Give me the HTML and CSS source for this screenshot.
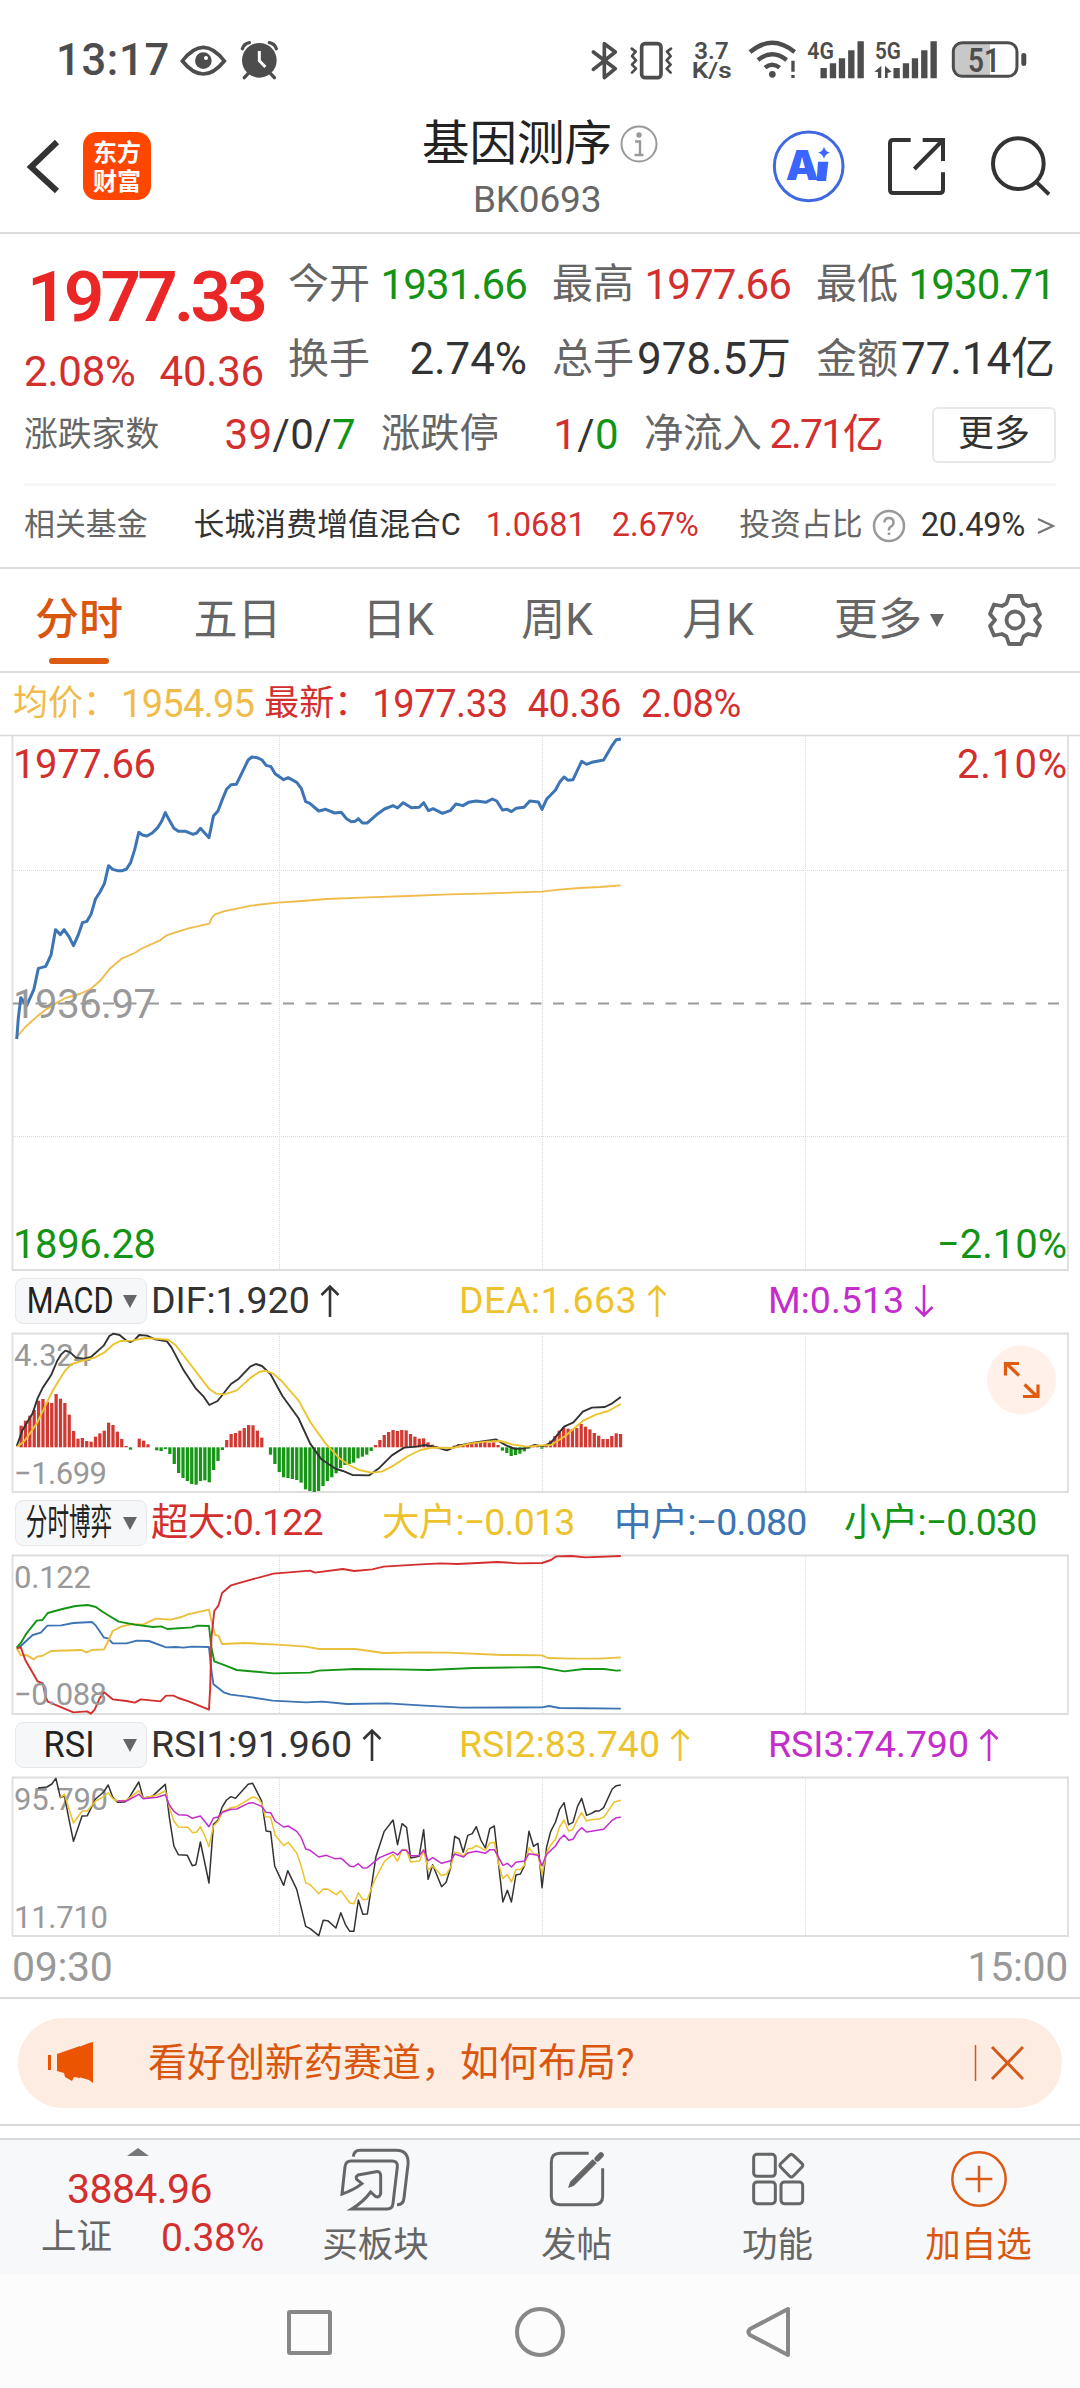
FILE: index.html
```html
<!DOCTYPE html>
<html lang="zh-CN">
<head>
<meta charset="utf-8">
<title>基因测序 BK0693</title>
<link rel="stylesheet" href="styles.css">
</head>
<body>
<svg class="defs" width="0" height="0">
  <symbol id="up" viewBox="0 0 20 34"><path d="M10 33V3M1.5 11L10 2.5L18.500 11" fill="none" stroke="currentColor" stroke-width="2.600"/></symbol>
  <symbol id="down" viewBox="0 0 20 34"><path d="M10 1V31M1.500 23L10 31.500L18.500 23" fill="none" stroke="currentColor" stroke-width="2.600"/></symbol>
</svg>

<div class="status">
  <span class="clock">13:17</span>
  <svg class="status-left" viewBox="540 45 300 120" width="100" height="40">
    <path d="M547 108Q610 26 673 108Q610 186 547 108Z" fill="none" stroke="#4d4d4d" stroke-width="11"/>
    <circle cx="610" cy="107" r="25" fill="#4d4d4d"/><circle cx="618" cy="99" r="6" fill="#fff"/>
    <circle cx="778" cy="106" r="52" fill="#4d4d4d"/>
    <path d="M727 71Q732 56 748 53M829 71Q824 56 808 53M744 146L733 158M812 146L823 158" stroke="#4d4d4d" stroke-width="10" stroke-linecap="round" fill="none"/>
    <path d="M778 78V107L796 126" stroke="#fff" stroke-width="9" fill="none"/>
  </svg>
  <svg class="status-right" viewBox="20 20 1330 150" width="443.3" height="50">
    <g fill="none" stroke="#4d4d4d" stroke-width="11" stroke-linejoin="round" stroke-linecap="round">
      <path d="M39 80L105 130L72 157V55L105 80L39 132"/>
      <rect x="184" y="55" width="58" height="102" rx="10" stroke-width="11"/>
      <path d="M154 70L166 79L155 92L167 105L155 118L167 130L155 142M272 70L260 79L271 92L259 105L271 118L259 130L271 142" stroke-width="8"/>
    </g>
    <g fill="none" stroke="#4d4d4d" stroke-width="13">
      <path d="M509 80Q575 25 643 80M533 104Q575 69 619 104M554 127Q575 109 598 127"/>
    </g>
    <circle cx="576" cy="147" r="10" fill="#4d4d4d"/>
    <path d="M638 106V139M638 149V158" stroke="#4d4d4d" stroke-width="10"/>
    <g stroke="#4d4d4d" stroke-width="19" stroke-linecap="butt">
      <path d="M730 128V159M758 114V159M785 99V159M813 75V159M841 48V159"/>
      <path d="M949 128V159M977 114V159M1004 99V159M1032 75V159M1060 48V159"/>
    </g>
    <path d="M882 139L903 122V158H893V140ZM934 139L914 122V158H922V143Z" fill="#4d4d4d"/>
    <path d="M1145 50H1229V155H1145Q1119 155 1119 128V77Q1119 50 1145 50Z" fill="#c8c8c8"/>
    <rect x="1119" y="52" width="191" height="101" rx="27" fill="none" stroke="#4d4d4d" stroke-width="9"/>
    <rect x="1323" y="83" width="15" height="39" rx="7" fill="#4d4d4d"/>
    <g class="status-text">
      <text x="342" y="101" font-size="72" textLength="103" lengthAdjust="spacingAndGlyphs">3.7</text>
      <text x="334" y="159" font-size="67" textLength="120" lengthAdjust="spacingAndGlyphs">K/s</text>
      <text x="681" y="101" font-size="70" textLength="80" lengthAdjust="spacingAndGlyphs">4G</text>
      <text x="884" y="101" font-size="70" textLength="78" lengthAdjust="spacingAndGlyphs">5G</text>
      <text x="1163" y="139" font-size="98" textLength="96" lengthAdjust="spacingAndGlyphs">51</text>
    </g>
  </svg>
</div>

<header class="header">
  <svg class="back" width="34" height="58" viewBox="0 0 34 58"><path d="M31 5L5 30L31 54" fill="none" stroke="#333" stroke-width="6"/></svg>
  <div class="logo">东方<br>财富</div>
  <div class="title">
    <div class="title-name">基因测序<svg width="38" height="38" viewBox="0 0 38 38"><circle cx="19" cy="19" r="17.500" fill="none" stroke="#999" stroke-width="2"/><circle cx="19" cy="10" r="2.700" fill="#999"/><path d="M15 16.500H20V29M14.500 30H23.500" fill="none" stroke="#999" stroke-width="2.400"/></svg></div>
    <div class="title-code">BK0693</div>
  </div>
  <svg class="tools" width="284" height="80" viewBox="570 300 852 240">
    <circle cx="686" cy="424" r="103" fill="none" stroke="#4068e0" stroke-width="9"/>
    <text x="617" y="465" class="ai">A</text>
    <path d="M714 410H745L738 468H710Z" fill="#3a66ff"/>
    <path d="M732 365Q736 380 750 383Q736 386 732 401Q728 386 714 383Q728 380 732 365Z" fill="#3a66ff"/>
    <g fill="none" stroke="#333" stroke-width="12">
      <path d="M992 345H940Q930 345 930 355V494Q930 504 940 504H1079Q1089 504 1089 494V442M1028 345H1089V408M1089 345L1003 432"/>
      <circle cx="1315" cy="416" r="76"/>
      <path d="M1370 472L1407 508"/>
    </g>
  </svg>
</header>

<section class="quote">
  <div class="quote-top">
    <div class="quote-main">
      <div class="price">1977.33</div>
      <div class="change"><span>2.08%</span><span>40.36</span></div>
    </div>
    <div class="quote-grid">
      <div class="cell"><label>今开</label><b class="green">1931.66</b></div>
      <div class="cell"><label>最高</label><b class="red">1977.66</b></div>
      <div class="cell"><label>最低</label><b class="green">1930.71</b></div>
      <div class="cell"><label>换手</label><b class="vol">2.74%</b></div>
      <div class="cell"><label>总手</label><b class="vol">978.5万</b></div>
      <div class="cell"><label>金额</label><b class="vol">77.14亿</b></div>
    </div>
  </div>
  <div class="breadth">
    <div class="cell"><label class="small">涨跌家数</label><b class="wide"><i class="red">39</i>/0/<i class="green">7</i></b></div>
    <div class="cell"><label>涨跌停</label><b class="wide"><i class="red">1</i>/<i class="green">0</i></b></div>
    <div class="cell"><label>净流入</label><b class="red inflow">2.71亿</b></div>
    <div class="more">更多</div>
  </div>
  <div class="fund">
    <span class="grey">相关基金</span>
    <span class="fund-name">长城消费增值混合C</span>
    <span class="red fund-nav">1.0681</span>
    <span class="red fund-pct">2.67%</span>
    <span class="grey fund-share">投资占比</span>
    <svg width="34" height="34" viewBox="0 0 34 34"><circle cx="17" cy="17" r="15" fill="none" stroke="#999" stroke-width="2.500"/><path d="M12.500 13.500Q12.500 9 17 9T21.500 13.500Q21.500 16 19 17.500T17 21.500M17 23.500V26" fill="none" stroke="#999" stroke-width="2.500"/></svg>
    <span class="fund-ratio">20.49%</span>
    <svg width="20" height="20" viewBox="0 0 20 20"><path d="M2 3L17 10L2 17" fill="none" stroke="#777" stroke-width="2.200"/></svg>
  </div>
</section>

<nav class="tabs">
  <span class="active">分时</span><span>五日</span><span>日K</span><span>周K</span><span>月K</span>
  <span>更多<i class="tri"></i></span>
  <span><svg width="54" height="54" viewBox="-27 -27 54 54" fill="none" stroke="#666" stroke-width="3.800" stroke-linejoin="round"><path d="M-6 -24H6L8.500 -16.500L13 -14L21 -15.500L25 -6L20 0L25 6L21 15.500L13 14L8.500 16.500L6 24H-6L-8.500 16.500L-13 14L-21 15.500L-25 6L-20 0L-25 -6L-21 -15.500L-13 -14L-8.500 -16.500Z"/><circle r="8.500"/></svg></span>
</nav>

<div class="legend">
  <span class="amber">均价：</span><b class="amber">1954.95</b>
  <span class="red last">最新：</span><b class="red">1977.33</b><b class="red">40.36</b><b class="red">2.08%</b>
</div>

<svg class="plot main-plot" width="1080" height="538" viewBox="0 733 1080 538">
  <path class="grid" d="M279.500 735V1268M542.500 735V1268M805.500 735V1268M13 869.500H1067M13 1135.500H1067"/>
  <path class="rule" d="M0 734.500H1080"/>
  <path class="frame" d="M12.500 735V1269M1068 735V1269M12 1269H1069"/>
  <path class="mid" d="M13 1002.500H1067"/>
  <g transform="translate(0 720) scale(.40816 .33333)">
    <path class="ln amber" d="M41 948L62 918L93 884L113 865L140 845L160 831L195 819L222 804L245 780L269 743L298 713L330 696L345 684L392 658L407 644L430 634L462 622L513 608L519 590L527 580L548 571L580 563L615 554L680 545L740 540L800 534L900 529L1000 525L1100 520L1180 518L1250 515L1328 512L1370 506L1420 501L1470 498L1521 493"/>
    <path class="ln blue thick" d="M41 954L45 890L51 830L65 855L83 805L94 742L112 736L125 702L136 626L148 641L157 626L169 647L180 674L191 644L202 605L213 601L223 580L234 534L245 513L256 487L266 434L276 445L288 449L300 449L310 444L320 425L330 386L340 334L349 342L360 345L373 336L387 319L396 301L405 275L415 298L426 322L437 331L455 331L473 340L482 336L491 322L512 350L523 285L534 270L545 235L555 205L566 191L579 190L608 117L617 108L630 110L642 117L652 133L664 137L674 158L695 176L706 170L727 184L738 202L749 242L759 247L781 270L798 265L820 276L836 274L849 293L861 302L870 301L878 293L888 306L900 306L925 279L942 264L963 254L974 261L988 245L1008 260L1027 259L1038 245L1050 269L1061 263L1084 277L1103 269L1117 249L1134 254L1148 244L1167 240L1190 244L1206 234L1217 240L1231 267L1243 265L1253 272L1264 262L1284 259L1298 240L1319 243L1328 265L1339 235L1361 207L1371 184L1382 168L1392 178L1404 176L1425 121L1437 130L1450 124L1479 117L1500 73L1510 56L1521 54"/>
  </g>
  <text class="axis big red" x="13" y="777" textLength="143">1977.66</text>
  <text class="axis big grey9" x="13" y="1017" textLength="143">1936.97</text>
  <text class="axis big green" x="13" y="1257" textLength="143">1896.28</text>
  <text class="axis big red" x="957" y="777" textLength="110">2.10%</text>
  <text class="axis big green" x="937" y="1257" textLength="130">−2.10%</text>
</svg>

<div class="ind-head">
  <div class="chip"><span class="squeeze-macd">MACD</span><i class="tri"></i></div>
  <span class="black">DIF:1.920<svg><use href="#up"/></svg></span>
  <span class="yellow dea">DEA:1.663<svg><use href="#up"/></svg></span>
  <span class="magenta">M:0.513<svg><use href="#down"/></svg></span>
</div>
<svg class="plot" width="1080" height="162" viewBox="0 1331 1080 162">
  <path class="grid" d="M279.500 1333V1491M542.500 1333V1491M805.500 1333V1491"/>
  <path class="frame" d="M12.500 1332.500H1068V1491H12.500Z"/>
  <text class="axis grey9" x="14" y="1365" textLength="77">4.324</text>
  <text class="axis grey9" x="14" y="1483" textLength="93">−1.699</text>
  <g transform="translate(0 1260) scale(.40816 .33333)">
    <g id="macd-bars"></g>
    <path class="ln black" d="M41 555L55 508L80 457L92 412L104 382L125 343L140 300L150 280L160 269L172 274L186 290L205 293L223 288L254 254L268 225L278 218L293 222L310 239L320 243L330 237L341 222L360 224L380 235L409 241L420 259L450 328L480 383L499 407L513 432L533 420L566 369L585 353L613 317L627 309L642 315L663 340L692 405L731 471L760 548L786 593L820 622L840 630L863 642L905 643L930 620L960 583L990 560L1020 557L1040 552L1060 556L1095 568L1120 555L1160 545L1215 535L1240 553L1262 564L1285 562L1310 552L1330 556L1350 545L1382 497L1405 484L1428 452L1450 440L1482 438L1500 427L1521 408"/>
    <path class="ln yellow" d="M41 558L60 540L90 488L130 387L160 328L176 309L200 300L232 290L255 275L278 250L295 240L325 239L355 231L412 236L430 252L512 383L530 398L550 400L580 388L615 349L635 333L650 329L668 337L690 360L733 421L760 483L798 548L830 590L855 612L880 627L910 635L935 632L960 617L1000 585L1030 567L1060 560L1110 561L1150 548L1190 542L1225 540L1255 550L1290 557L1320 554L1350 552L1385 525L1430 478L1460 461L1490 450L1521 429"/>
  </g>
  <circle cx="1021.500" cy="1379" r="34.500" fill="#fff1ea"/>
  <path d="M1019 1376L1006.500 1364M1005.500 1376V1364H1019M1024.500 1385L1037 1397M1038 1385V1397H1023" transform="translate(0 -1.500)" fill="none" stroke="#e05a10" stroke-width="3.200"/>
</svg>

<div class="ind-head four">
  <div class="chip"><span class="squeeze-cjk">分时博弈</span><i class="tri"></i></div>
  <span class="red">超大:0.122</span>
  <span class="yellow">大户:−0.013</span>
  <span class="blue">中户:−0.080</span>
  <span class="green">小户:−0.030</span>
</div>
<svg class="plot" width="1080" height="162" viewBox="0 1553 1080 162">
  <path class="grid" d="M279.500 1555V1713M542.500 1555V1713M805.500 1555V1713"/>
  <path class="frame" d="M12.500 1554.500H1068V1713H12.500Z"/>
  <g transform="translate(0 1490) scale(.40816 .33333)">
    <path class="ln blue" d="M41 469L51 465L80 432L100 425L116 404L150 403L180 396L225 393L235 404L255 440L265 442L276 457L310 457L335 449L365 450L407 469L430 468L450 470L470 467L512 468L518 540L523 580L548 604L565 611L600 616L668 629L750 634L790 632L850 639L950 637L1030 643L1130 650L1328 649L1345 645L1370 651L1521 653"/>
    <path class="ln gold" d="M41 472L51 493L65 492L82 505L93 496L103 495L125 480L200 477L212 484L225 477L255 475L264 453L276 420L298 406L325 399L350 401L382 383L418 386L445 378L460 370L512 356L520 400L527 432L535 434L544 459L600 456L680 461L750 467L781 474L870 474L940 486L1030 484L1100 485L1230 492L1328 493L1342 501L1400 503L1470 503L1521 499"/>
    <path class="ln green" d="M41 470L51 456L65 427L90 389L104 387L117 366L153 354L185 345L215 342L235 348L252 363L291 392L330 401L375 408L395 406L410 414L470 409L484 404L512 405L518 470L525 511L553 524L580 537L670 547L760 545L781 539L870 534L970 535L1050 537L1160 531L1270 529L1320 528L1383 541L1430 534L1480 534L1510 539L1521 538"/>
    <path class="ln red" d="M41 472L51 469L62 507L92 571L105 577L111 615L117 632L180 664L213 661L223 668L232 656L244 622L255 604L276 625L310 630L330 635L345 625L393 631L407 614L425 614L437 621L462 631L512 656L515 590L518 440L525 360L535 344L544 306L566 283L600 271L670 248L760 239L772 245L840 234L868 240L912 235L940 227L1030 220L1080 217L1120 219L1220 213L1270 217L1328 216L1350 207L1363 196L1400 195L1435 199L1521 195"/>
  </g>
  <text class="axis grey9" x="14" y="1587" textLength="77">0.122</text>
  <text class="axis grey9" x="14" y="1704" textLength="93">−0.088</text>
</svg>

<div class="ind-head">
  <div class="chip"><span class="squeeze-rsi">RSI</span><i class="tri"></i></div>
  <span class="black">RSI1:91.960<svg><use href="#up"/></svg></span>
  <span class="yellow">RSI2:83.740<svg><use href="#up"/></svg></span>
  <span class="magenta">RSI3:74.790<svg><use href="#up"/></svg></span>
</div>
<svg class="plot" width="1080" height="162" viewBox="0 1775 1080 162">
  <path class="grid" d="M279.500 1777V1936M542.500 1777V1936M805.500 1777V1936"/>
  <path class="frame" d="M12.500 1776.500H1068V1935H12.500Z"/>
  <text class="axis grey9" x="14" y="1809" textLength="94">95.790</text>
  <text class="axis grey9" x="14" y="1927" textLength="94">11.710</text>
  <g transform="translate(0 1710) scale(.40816 .33333)">
    <path class="ln black thin" d="M93 231L115 228L127 219L137 202L148 260L158 255L169 325L180 391L201 315L214 314L234 264L254 243L265 222L276 258L288 274L306 273L315 263L340 213L351 262L373 256L405 220L415 320L426 405L437 431L459 433L471 464L480 461L491 393L512 516L523 340L534 328L544 289L555 267L566 257L577 262L608 220L619 217L641 270L652 360L663 362L673 465L695 523L705 479L727 535L749 646L760 653L781 674L792 628L803 629L823 651L835 605L846 640L857 661L867 661L878 567L889 610L900 609L921 437L941 362L963 327L974 401L985 338L996 349L1006 441L1027 436L1038 356L1049 505L1060 461L1082 527L1093 514L1104 470L1114 376L1125 384L1135 424L1146 373L1157 368L1167 347L1178 387L1189 411L1200 353L1211 345L1222 465L1232 573L1243 538L1253 573L1264 492L1275 489L1285 464L1296 361L1307 406L1318 397L1328 530L1339 410L1349 362L1361 333L1371 295L1382 275L1393 341L1404 334L1415 286L1425 262L1437 313L1448 308L1459 300L1468 300L1479 290L1500 234L1510 224L1521 222"/>
    <path class="ln yellow thin" d="M148 260L158 250L169 294L180 336L201 300L214 300L234 270L255 257L265 245L276 262L288 270L310 268L340 239L351 262L385 252L405 240L415 290L426 330L437 348L460 349L472 365L482 363L491 347L501 372L512 407L523 345L535 330L545 302L566 290L580 287L619 258L630 262L641 276L650 317L663 318L674 372L695 404L706 394L727 426L738 465L749 516L760 521L781 548L792 534L804 535L824 551L835 539L857 576L867 578L878 545L889 566L900 565L918 507L942 451L963 430L974 451L985 416L996 418L1006 453L1028 450L1038 417L1049 477L1060 464L1082 494L1094 489L1104 470L1114 424L1125 426L1136 436L1146 414L1157 412L1167 403L1189 418L1200 396L1211 394L1222 460L1232 503L1243 490L1253 513L1264 476L1275 475L1285 463L1296 410L1307 428L1318 430L1328 490L1339 425L1349 403L1361 385L1371 348L1382 327L1393 360L1403 356L1415 325L1425 305L1437 330L1448 326L1470 323L1480 318L1504 274L1521 268"/>
    <path class="ln magenta thin" d="M288 270L310 270L340 250L351 263L385 259L405 251L415 282L426 301L437 311L459 313L471 322L491 315L512 347L523 321L534 318L545 304L566 295L580 294L608 277L619 275L641 286L652 304L663 305L674 330L695 348L706 345L727 361L738 380L749 414L760 418L781 438L800 433L820 443L836 442L857 465L867 467L878 458L889 471L900 470L930 440L963 423L974 432L985 417L996 418L1006 434L1027 434L1038 417L1049 449L1060 440L1082 457L1104 449L1114 429L1136 438L1146 426L1167 421L1189 427L1200 416L1211 416L1222 440L1232 463L1243 457L1253 468L1264 454L1285 450L1296 428L1318 433L1328 464L1339 430L1361 405L1371 385L1382 372L1393 388L1404 385L1415 362L1425 350L1437 363L1479 355L1500 328L1510 320L1521 319"/>
  </g>
</svg>
<div class="times"><span>09:30</span><span>15:00</span></div>

<div class="banner-wrap">
  <div class="banner">
    <svg width="48" height="42" viewBox="0 0 48 42" fill="#eb5502"><path d="M1 13H4V28H1ZM10 12L33 4V36L27 35L25 39L18 35L17 31L10 29ZM32 5L42 1L46 0V41L42 38L32 35Z"/></svg>
    <span>看好创新药赛道，如何布局?</span>
    <svg class="close" width="50" height="38" viewBox="0 0 50 38" fill="none" stroke="#d4581b"><path d="M1.500 1V37" stroke-width="1.500"/><path d="M18 3L49 35M49 3L18 35" stroke-width="3"/></svg>
  </div>
</div>
<div class="strip"></div>

<footer class="bar">
  <div class="index">
    <i class="up-tri"></i>
    <div class="index-value">3884.96</div>
    <div class="index-row"><span>上证</span><b>0.38%</b></div>
  </div>
  <div class="item"><svg viewBox="30 30 216 216"><path d="M70 62Q72 43 90 43H198Q238 43 234 86L222 186Q220 207 201 206M36 174L45 92Q47 75 63 75H186Q204 75 202 93L189 202Q187 219 172 219H65Q100 198 122 168L136 181Q147 187 152 173V118Q151 105 138 107L84 117Q76 121 80 130L96 143Q70 163 36 174Z"/></svg><span>买板块</span></div>
  <div class="item"><svg viewBox="633 30 216 216"><path d="M776 52H690Q664 52 664 78V181Q664 206 690 206H792Q818 206 818 181V97"/><path d="M716 154L722 137L788 71L799 81L732 148Z" fill="#666" stroke-width="3"/><path d="M802 68L813 57" stroke-width="17" stroke-linecap="round"/></svg><span>发帖</span></div>
  <div class="item"><svg viewBox="1236 30 216 216"><rect x="1271" y="55" width="65" height="66" rx="10"/><rect x="1271" y="138" width="65" height="65" rx="10"/><rect x="1353" y="138" width="65" height="65" rx="10"/><path d="M1378 58L1352 83Q1348 88 1352 93L1378 120Q1384 126 1390 120L1416 93Q1421 88 1416 83L1390 58Q1384 52 1378 58Z"/></svg><span>功能</span></div>
  <div class="item add"><svg viewBox="0 30 216 216"><circle cx="108" cy="129" r="80"/><path d="M68 129H148M108 89V169"/></svg><span>加自选</span></div>
</footer>
<div class="sysnav">
  <svg width="506" height="54" viewBox="286 2304 506 54" fill="none" stroke="#888" stroke-width="4" stroke-linejoin="round"><rect x="289" y="2311" width="41" height="41" rx="1"/><circle cx="540" cy="2331" r="23"/><path d="M788 2308V2354L750 2334Q747 2331 750 2328Z"/></svg>
</div>
<script src="bars.js"></script>
</body>
</html>
```
FILE: bars.js
```js
// One MACD histogram bar per sample, drawn up or down from the zero line
const macd = [0,65,80,95,112,140,145,136,133,160,146,133,98,49,26,28,19,17,32,42,50,74,67,47,25,4,-7,0,26,20,9,0,-9,-11,-5,-20,-50,-77,-92,-101,-110,-112,-101,-99,-105,-68,-41,-8,22,40,43,50,58,67,66,50,29,0,-22,-50,-74,-90,-92,-95,-98,-106,-126,-131,-134,-131,-116,-101,-90,-78,-62,-53,-50,-46,-33,-28,-22,-11,7,22,37,46,52,49,52,51,40,32,26,27,15,8,3,0,0,0,5,10,8,10,14,16,17,17,14,15,7,-10,-17,-26,-23,-19,-12,-4,3,4,-4,6,20,34,50,60,56,55,58,70,62,54,43,35,25,25,34,42,40];
const host = document.getElementById('macd-bars');
macd.forEach((v, i) => {
  if (!v) return;
  const r = document.createElementNS('http://www.w3.org/2000/svg', 'rect');
  r.setAttribute('x', 37 + i * 10.72);
  r.setAttribute('y', v > 0 ? 559 - v : 559);
  r.setAttribute('width', 8);
  r.setAttribute('height', Math.abs(v));
  r.setAttribute('class', v > 0 ? 'bar-up' : 'bar-down');
  host.appendChild(r);
});
```
FILE: styles.css
```css
* { box-sizing: border-box; }
body { margin: 0; width: 1080px; background: #fff; color: #333; font-family: Roboto, "Noto Sans CJK SC", sans-serif; font-size: 42px; line-height: 1; }
b, i { font-weight: 400; font-style: normal; }
svg { display: block; flex: none; }
.defs { height: 0; }
.red { color: #d32f2f; fill: #d32f2f; }
.green { color: #149414; fill: #149414; }
.amber { color: #efbc4c; }
.gold { color: #eabf3c; }
.yellow { color: #edc32d; }
.blue { color: #3c74b4; }
.magenta { color: #c42dcb; }
.black { color: #333; }
.grey { color: #666; }
.grey9 { fill: #999; }

.status { height: 110px; display: flex; padding: 38px 50px 0 56px; color: #4d4d4d; }
.clock { font-size: 43.500px; font-weight: 500; line-height: 45px; width: 124px; letter-spacing: .7px; }
.status-left { margin-top: 2px; }
.status-right { margin-left: auto; margin-top: -6.500px; }
.status-text { fill: #4d4d4d; font-weight: 600; }

.header { height: 124px; display: flex; border-bottom: 2px solid #dcdcdc; }
.back { margin: 27px 0 0 26px; }
.logo { width: 68px; height: 68px; margin: 22px 0 0 23px; border-radius: 14px; background: #ff4600; color: #fff; font: 700 24px/29px "Noto Sans CJK SC", sans-serif; text-align: center; padding-top: 4px; }
.title { width: 240px; margin-left: 271px; padding-top: 8px; }
.title-name { display: flex; font-size: 47.500px; line-height: 52px; color: #222; }
.title-name svg { margin: 7px 0 0 8px; }
.title-code { font-size: 37px; line-height: 44px; margin: 8px 0 0 51px; color: #666; letter-spacing: -.2px; }
.tools { margin: 15px 0 0 107.500px; }

.quote { height: 335px; padding: 13px 24px 0; border-bottom: 2px solid #dcdcdc; }
.quote-top { display: flex; height: 150px; }
.quote-main { width: 264px; padding-top: 12px; color: #d32f2f; }
.price { font-size: 71px; font-weight: 600; line-height: 75px; letter-spacing: -3.800px; color: #ea2626; padding-left: 3px; }
.change { display: flex; justify-content: space-between; width: 240px; line-height: 75px; letter-spacing: -.2px; }
.quote-grid { display: grid; grid-template-columns: 239px 239px 239px; column-gap: 25px; grid-auto-rows: 75px; }
.cell { display: flex; justify-content: space-between; align-items: center; line-height: 75px; white-space: nowrap; }
.cell label { color: #666; font-size: 41px; }
.cell b { letter-spacing: -.9px; }
.cell b.wide { letter-spacing: .4px; }
.cell b.vol { font-size: 44px; letter-spacing: -.1px; }
.cell b.inflow { font-size: 41px; letter-spacing: -1.700px; }
.breadth { display: grid; grid-template-columns: 332px 238px 238px 149px; column-gap: 25px; height: 75px; align-items: center; justify-content: start; }
.breadth .cell label { font-size: 39.300px; }
.breadth .cell label.small { font-size: 33.800px; }
.more { height: 56px; width: 124px; justify-self: end; border: 2px solid #e8e8e8; border-radius: 6px; text-align: center; font-size: 36px; line-height: 51px; }
.fund { margin-top: 11px; border-top: 3px solid #f6f6f6; display: flex; align-items: center; height: 82px; font-size: 30.900px; white-space: nowrap; }
.fund-name { margin-left: 46px; }
.fund-nav { margin-left: 25px; font-size: 32.500px; }
.fund-pct { margin-left: 26px; font-size: 32.500px; }
.fund-share { margin: 0 9px 0 auto; }
.fund-ratio { margin: 0 11px 0 15px; font-size: 32.500px; letter-spacing: -.2px; }

.tabs { height: 104px; display: grid; grid-template-columns: 158px 159px 162px 156px 166px 176px 76px; justify-content: start; border-bottom: 2px solid #dcdcdc; font-size: 44px; color: #666; }
.tabs span { display: flex; align-items: center; justify-content: center; height: 102px; }
.tabs .active { color: #d9560f; position: relative; font-weight: 500; }
.active::after { content: ""; position: absolute; left: 49px; bottom: 7px; width: 60px; height: 6px; border-radius: 3px; background: #dd5a12; }
.tri { border: 7px solid transparent; border-top: 13px solid #666; border-bottom: 0; }
.tabs .tri { margin-left: 8px; }

.legend { height: 61px; padding-left: 13px; display: flex; align-items: center; font-size: 35px; }
.legend b { font-size: 38px; letter-spacing: -.4px; margin-right: 20px; }
.legend b.amber { margin-right: 0; letter-spacing: -.7px; }
.legend span { width: 108px; white-space: nowrap; }
.legend .last { margin-left: 10px; }

.plot { overflow: hidden; }
.grid { fill: none; stroke: #dadada; stroke-width: 1; stroke-dasharray: 1 1; }
.rule { stroke: #dadada; stroke-width: 1.500; }
.frame { fill: none; stroke: #dedede; stroke-width: 1.800; }
.mid { stroke: #999; stroke-width: 2; stroke-dasharray: 11 11.500; }
.ln { fill: none; stroke: currentColor; stroke-width: 1.900; vector-effect: non-scaling-stroke; stroke-linejoin: round; }
.ln.red, .ln.green { fill: none; }
.ln.thick { stroke-width: 3; }
.ln.thin { stroke-width: 1.500; }
.axis { font-size: 31px; }
.axis.big { font-size: 40px; }
.bar-up { fill: #d13a33; }
.bar-down { fill: #159615; }

.ind-head { height: 60px; display: grid; grid-template-columns: 136px 308px 309px 1fr; padding-left: 15px; font-size: 37.500px; line-height: 56px; white-space: nowrap; }
.ind-head.four { grid-template-columns: 136px 231px 232px 230px 1fr; letter-spacing: -.8px; }
.ind-head > .dea { letter-spacing: .5px; }
.ind-head > span { display: flex; }
.ind-head > span svg { width: 20px; height: 34px; margin: 12px 0 0 10px; }
.chip { width: 132px; height: 46px; margin-top: 6px; background: #f6f7f9; border: 1.500px solid #e6e8ec; border-radius: 8px; display: flex; align-items: center; justify-content: flex-end; padding-right: 8px; color: #222; line-height: 42px; letter-spacing: 0; }
.chip span { width: 102px; text-align: center; margin-right: 3px; }
.squeeze-macd { font-size: 37px; transform: scaleX(.83); }
.squeeze-cjk { font-size: 36px; transform: scaleX(.6); display: flex; justify-content: center; }
.squeeze-rsi { font-size: 37px; transform: scaleX(.93); }
.chip .tri { margin-right: 1px; }

.times { height: 61px; display: flex; justify-content: space-between; padding: 0 12px 0 12px; font-size: 41px; line-height: 59px; color: #999; letter-spacing: -.3px; border-bottom: 2px solid #dadada; }
.banner-wrap { height: 127px; padding: 19px 18px 0; border-bottom: 2px solid #dadade; }
.banner { height: 90px; border-radius: 45px; background: #fcece2; display: flex; align-items: center; padding: 0 38px 0 29px; color: #d9560f; font-size: 39px; }
.banner span { margin-left: 53px; }
.close { margin-left: auto; }
.strip { height: 14px; border-bottom: 2px solid #d8dadf; }

.bar { height: 135px; background: #f7f8fa; display: flex; }
.index { width: 275px; padding-top: 8px; color: #d32f2f; }
.up-tri { display: block; width: 0; margin-left: 127px; border: 11px solid transparent; border-bottom: 8px solid #777; border-top: 0; }
.index-value { font-size: 41px; line-height: 48px; margin: 9px 0 0 67px; letter-spacing: -.6px; }
.index-row { display: flex; justify-content: space-between; align-items: center; height: 50px; padding: 0 11px 0 41px; font-size: 35.500px; color: #666; }
.index-row b { color: #d32f2f; font-size: 39px; letter-spacing: -.3px; }
.item { width: 201px; display: flex; flex-direction: column; align-items: center; padding-top: 6px; color: #666; font-size: 35.500px; line-height: 55px; }
.item svg { width: 72px; height: 72px; fill: none; stroke: #666; stroke-width: 9; overflow: visible; }
.item.add { color: #d9560f; }
.item.add svg { stroke: #dc5a14; stroke-width: 7.500; }
.sysnav { height: 114px; background: #fcfcfc; padding: 30px 0 0 286px; }
.ai { font: 900 124px Inter, Roboto, sans-serif; fill: #3a66ff; }
```
